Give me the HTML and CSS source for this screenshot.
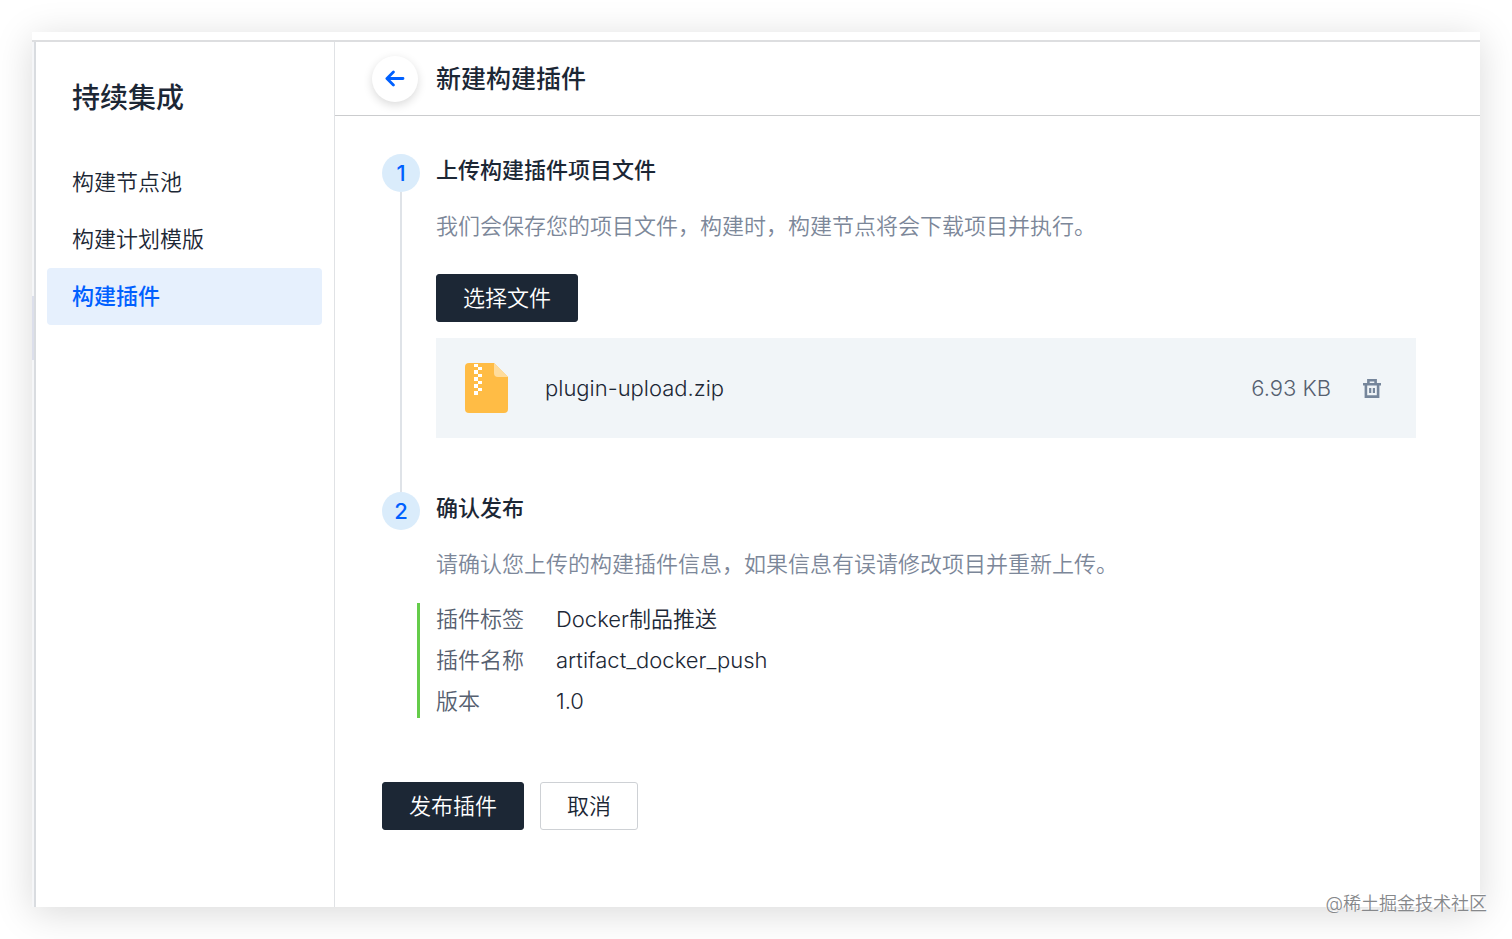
FILE: index.html
```
<!DOCTYPE html>
<html lang="zh-CN">

<head>
  <meta charset="utf-8">
  <meta name="viewport" content="width=device-width, initial-scale=1">
  <title>新建构建插件</title>
  <link rel="stylesheet" href="styles.css">
</head>

<body>

  <div class="window">
    <div class="window-top"></div>
    <div class="window-body">
      <div class="rail"><div class="rail-thumb"></div></div>

      <aside class="sidebar">
        <h2 class="sidebar-title">持续集成</h2>
        <nav class="menu">
          <a class="menu-item" href="#">构建节点池</a>
          <a class="menu-item" href="#">构建计划模版</a>
          <a class="menu-item active" href="#">构建插件</a>
        </nav>
      </aside>

      <main class="main">
        <header class="header">
          <button type="button" class="back" aria-label="返回">
            <svg width="20" height="18" viewBox="0 0 20 18" fill="none" stroke="#0060ff" stroke-width="2.8" stroke-linecap="round" stroke-linejoin="round">
              <path d="M18 8.5H2.2M8.4 2L1.9 8.5l6.5 6.5" />
            </svg>
          </button>
          <h1 class="header-title">新建构建插件</h1>
        </header>

        <div class="content">
          <section class="step">
            <div class="step-mark"><span class="step-number">1</span></div>
            <div class="step-body">
              <h3 class="step-title">上传构建插件项目文件</h3>
              <p class="step-desc">我们会保存您的项目文件，构建时，构建节点将会下载项目并执行。</p>
              <button type="button" class="btn btn-primary">选择文件</button>
              <div class="file">
                <svg class="file-icon" width="43" height="50" viewBox="0 0 43 50">
                  <path fill="#ffbc45" d="M4 0h25l14 14v32a4 4 0 0 1-4 4H4a4 4 0 0 1-4-4V4a4 4 0 0 1 4-4z" />
                  <path fill="#ffdc9c" d="M29 0l14 14H33a4 4 0 0 1-4-4z" />
                  <path fill="#fff" d="M9 1h4v3H9zM13 4h4v3h-4zM9 7h4v4H9zM13 11h4v3h-4zM9 14h4v4H9zM13 18h4v3h-4zM9 21h4v4H9zM13 25h4v3h-4zM9 28h4v4H9z" />
                </svg>
                <span class="file-name">plugin-upload.zip</span>
                <span class="file-size">6.93 KB</span>
                <button type="button" class="file-delete" aria-label="删除">
                  <svg width="18" height="22" viewBox="0 0 18 22" fill="none" stroke="#76869b" stroke-width="2.6">
                    <path d="M0 7.2h18M5.4 7V3.3h7.2V7M2.9 7v12.6h12.2V7" />
                    <path stroke-width="2.2" d="M7.2 11v5M10.9 11v5" />
                  </svg>
                </button>
              </div>
            </div>
          </section>

          <section class="step">
            <div class="step-mark"><span class="step-number">2</span></div>
            <div class="step-body">
              <h3 class="step-title">确认发布</h3>
              <p class="step-desc">请确认您上传的构建插件信息，如果信息有误请修改项目并重新上传。</p>
              <dl class="info">
                <dt>插件标签</dt>
                <dd>Docker制品推送</dd>
                <dt>插件名称</dt>
                <dd>artifact_docker_push</dd>
                <dt>版本</dt>
                <dd>1.0</dd>
              </dl>
            </div>
          </section>

          <div class="actions">
            <button type="button" class="btn btn-primary">发布插件</button>
            <button type="button" class="btn">取消</button>
          </div>
        </div>
      </main>
    </div>
  </div>

  <div class="watermark">@稀土掘金技术社区</div>

</body>

</html>
```
FILE: styles.css
```
* {
  box-sizing: border-box;
}

body {
  position: relative;
  display: flex;
  min-height: 100vh;
  margin: 0;
  padding: 32px;
  background: #fff;
  color: #1c2735;
  font-family: Inter, "Noto Sans CJK SC", sans-serif;
  font-size: 22px;
  font-weight: 350;
  line-height: 32px;
}

h1,
h2,
h3,
p,
dl,
dd {
  margin: 0;
}

button {
  font: inherit;
  color: inherit;
  cursor: pointer;
}

.window {
  flex: 1;
  display: flex;
  flex-direction: column;
  background: #fff;
  box-shadow: 0 6px 36px rgba(0, 0, 0, 0.15);
}

.window-top {
  height: 10px;
  border-bottom: 2px solid #dddee0;
}

.window-body {
  flex: 1;
  display: flex;
}

/* thin strip left of the sidebar */
.rail {
  width: 4px;
  padding-top: 254px;
  background: #f5f6f8;
  border-right: 2px solid #d9dce0;
}

.rail-thumb {
  height: 64px;
  background: #dcdfeb;
}

.sidebar {
  width: 299px;
  padding: 36px 12px 0 11px;
  border-right: 1px solid #e0e2e5;
}

.sidebar-title {
  padding-left: 25px;
  font-size: 28px;
  font-weight: 500;
  line-height: 40px;
}

.menu {
  display: flex;
  flex-direction: column;
  margin-top: 36px;
}

.menu-item {
  padding: 12px 25px;
  border-radius: 4px;
  color: inherit;
  line-height: 33px;
  text-decoration: none;
}

.menu-item.active {
  background: #e6f0fd;
  color: #0060ff;
  font-weight: 500;
}

.main {
  flex: 1;
}

.header {
  display: flex;
  align-items: center;
  gap: 18px;
  height: 74px;
  padding-left: 37px;
  border-bottom: 1px solid #cbccce;
}

.back {
  display: flex;
  align-items: center;
  justify-content: center;
  width: 46px;
  height: 46px;
  padding: 0;
  border: 0;
  border-radius: 50%;
  background: #fff;
  box-shadow: 0 3px 10px rgba(0, 0, 0, 0.15);
}

.header-title {
  font-size: 25px;
  font-weight: 500;
}

.content {
  padding: 38px 64px 40px 47px;
}

.step {
  display: flex;
  gap: 16px;
}

.step-mark {
  display: flex;
  flex-direction: column;
  align-items: center;
  width: 38px;
}

/* line down to the next step */
.step:first-child .step-mark::after {
  content: "";
  flex: 1;
  width: 2px;
  background: #dfe3e8;
}

.step-number {
  width: 38px;
  border-radius: 50%;
  background: #daecfb;
  color: #0060ff;
  font-weight: 500;
  line-height: 38px;
  text-align: center;
}

.step-body {
  flex: 1;
}

.step:first-child .step-body {
  padding-bottom: 54px;
}

.step-title {
  font-size: 22px;
  font-weight: 500;
}

.step-desc {
  margin-top: 24px;
  color: #7c8799;
}

.btn {
  height: 48px;
  padding: 0 26px;
  border: 1px solid #ced1d5;
  border-radius: 3px;
  background: #fff;
}

.btn-primary {
  border-color: #1c2735;
  background: #1c2735;
  color: #fff;
}

.step-body .btn {
  display: block;
  margin-top: 32px;
}

.file {
  display: flex;
  align-items: center;
  height: 100px;
  margin-top: 16px;
  padding: 0 35px 0 29px;
  background: #f1f5f8;
}

.file-name {
  flex: 1;
  margin-left: 37px;
}

.file-size {
  color: #566070;
}

.file-delete {
  display: flex;
  margin-left: 32px;
  padding: 0;
  border: 0;
  background: none;
}

.info {
  display: grid;
  grid-template-columns: 88px 1fr;
  gap: 8px 32px;
  margin: 23px 0 0 -19px;
  padding-left: 16px;
  border-left: 3px solid #65cc4a;
  line-height: 33px;
}

.info dt {
  color: #566070;
}

.actions {
  display: flex;
  gap: 16px;
  margin-top: 64px;
}

.watermark {
  position: absolute;
  right: 25px;
  bottom: 19px;
  color: #86888b;
  font-size: 18px;
  text-shadow: -1px -1px 0 #fff;
}
```
